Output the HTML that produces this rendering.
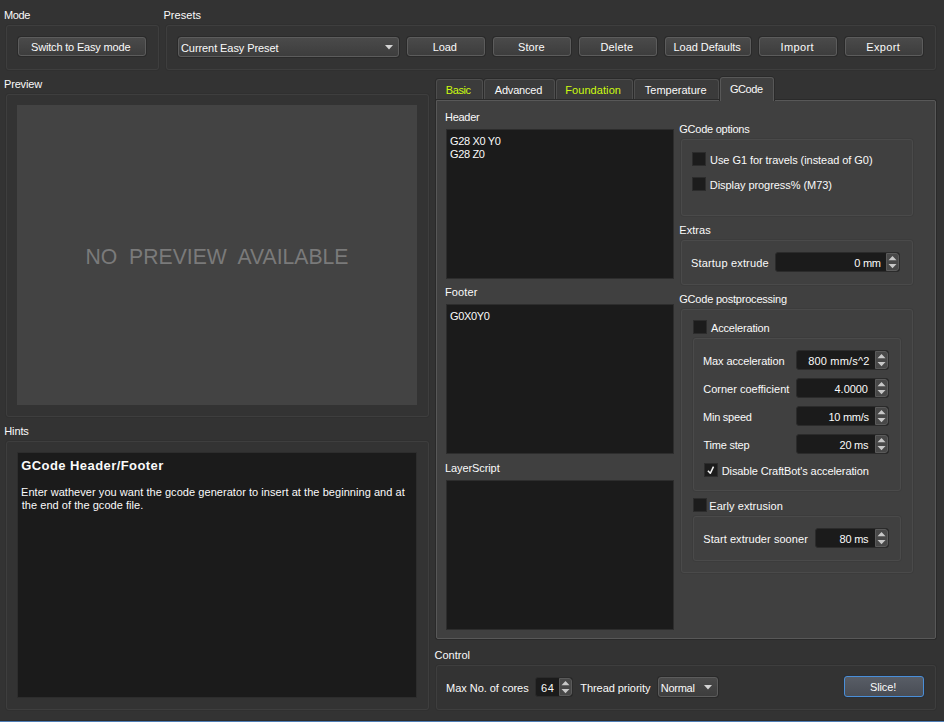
<!DOCTYPE html>
<html>
<head>
<meta charset="utf-8">
<title>Slicer settings</title>
<style>
*{box-sizing:border-box;margin:0;padding:0}
html,body{width:944px;height:722px;overflow:hidden}
body{background:#333333;font-family:"Liberation Sans",sans-serif;font-size:11px;color:#fafafa;position:relative}
.a{position:absolute}
.t{position:absolute;white-space:pre;line-height:13px;height:13px;z-index:5}
.grp{position:absolute;border:1px solid #3e3e3e;border-radius:3px;box-shadow:0 0 0 1px rgba(0,0,0,.06)}
.grp.in{border-color:#4a4a4a}
.btn{position:absolute;border:1px solid #5c5c5c;border-radius:3px;background:linear-gradient(#4a4a4a,#3d3d3d);box-shadow:0 0 0 1px #2a2a2a}
.btn.def{border-color:#4a8fd8;background:linear-gradient(#585d66,#494d55);box-shadow:0 0 0 1px #2c3037}
.ta{position:absolute;background:#1b1b1b;border:1px solid #2d2d2d}
.cb{position:absolute;width:14px;height:14px;background:#1c1c1c;border:1px solid #2c2c2c}
.spin{position:absolute;background:#1b1b1b;border:1px solid #2b2b2b;border-radius:3px}
.spin .ar{position:absolute;right:0;top:0;bottom:0;width:13px;background:#484848;border:1px solid #5a5a5a;border-radius:0 3px 3px 0}
.tab{position:absolute;top:79px;height:20px;border:1px solid #4e4e4e;border-bottom:0;border-radius:3px 3px 0 0;background:#3b3b3b;box-shadow:0 0 0 1px #2a2a2a}
.tab.sel{top:77px;height:24px;background:#404040;border-color:#585858;z-index:3;box-shadow:1px 0 0 0 #2a2a2a,-1px 0 0 0 #2a2a2a,0 -1px 0 0 #2a2a2a;clip-path:inset(-1px -1px 0 -1px)}
.pane{position:absolute;left:436px;top:100px;width:500px;height:539px;background:#404040;border:1px solid #585858;border-radius:0 2px 2px 2px;box-shadow:0 0 0 1px #2a2a2a;z-index:1}
.z2>*{z-index:4}
</style>
</head>
<body>
<div class="grp " style="left:6px;top:25px;width:153px;height:45px"></div>
<div class="grp " style="left:166px;top:25px;width:770px;height:45px"></div>
<div class="btn" style="left:18px;top:37px;width:128px;height:19px;"></div>
<div class="btn" style="left:178px;top:37px;width:221px;height:20px;"><svg class="a" style="right:5px;top:7px" width="8" height="5"><path d="M0 0h8L4 4.4z" fill="#d4d4d4"/></svg></div>
<div class="btn" style="left:407px;top:37px;width:78px;height:19px;"></div>
<div class="btn" style="left:493px;top:37px;width:78px;height:19px;"></div>
<div class="btn" style="left:579px;top:37px;width:78px;height:19px;"></div>
<div class="btn" style="left:665px;top:37px;width:86px;height:19px;"></div>
<div class="btn" style="left:759px;top:37px;width:78px;height:19px;"></div>
<div class="btn" style="left:845px;top:37px;width:78px;height:19px;"></div>
<div class="grp " style="left:6px;top:94px;width:423px;height:323px"></div>
<div class="a" style="left:17px;top:105px;width:400px;height:300px;background:#434343"></div>
<div class="a" id="nopv" style="left:17px;top:244px;width:400px;text-align:center;font-size:21.2px;line-height:26px;color:#7a7a7a;white-space:pre">NO  PREVIEW  AVAILABLE</div>
<div class="grp " style="left:6px;top:441px;width:423px;height:269px"></div>
<div class="ta" style="left:17px;top:452px;width:400px;height:246px"></div>
<div class="pane"></div>
<div class="tab" style="left:436px;width:47px"></div>
<div class="tab" style="left:484px;width:71px"></div>
<div class="tab" style="left:556px;width:77px"></div>
<div class="tab" style="left:634px;width:85px"></div>
<div class="tab sel" style="left:720px;width:54px"></div>
<div class="z2">
<div class="ta" style="left:446px;top:129px;width:228px;height:150px"></div>
<div class="ta" style="left:446px;top:304px;width:228px;height:150px"></div>
<div class="ta" style="left:446px;top:480px;width:228px;height:150px"></div>
<div class="grp in" style="left:681px;top:139px;width:232px;height:77px"></div>
<div class="cb" style="left:692px;top:152px"></div>
<div class="cb" style="left:692px;top:177px"></div>
<div class="grp in" style="left:681px;top:240px;width:232px;height:45px"></div>
<div class="spin" style="left:775px;top:252px;width:125px;height:20px"><div class="ar"><svg width="11" height="16" class="a" style="left:0;top:0"><path d="M1.5 6.2h8L5.5 2z M1.5 10h8L5.5 14.2z" fill="#c8c8c8"/></svg></div></div>
<div class="grp in" style="left:681px;top:309px;width:232px;height:264px"></div>
<div class="cb" style="left:693px;top:320px"></div>
<div class="grp in" style="left:693px;top:338px;width:208px;height:153px"></div>
<div class="spin" style="left:796px;top:350px;width:93px;height:20px"><div class="ar"><svg width="11" height="16" class="a" style="left:0;top:0"><path d="M1.5 6.2h8L5.5 2z M1.5 10h8L5.5 14.2z" fill="#c8c8c8"/></svg></div></div>
<div class="spin" style="left:796px;top:378px;width:93px;height:20px"><div class="ar"><svg width="11" height="16" class="a" style="left:0;top:0"><path d="M1.5 6.2h8L5.5 2z M1.5 10h8L5.5 14.2z" fill="#c8c8c8"/></svg></div></div>
<div class="spin" style="left:796px;top:406px;width:93px;height:20px"><div class="ar"><svg width="11" height="16" class="a" style="left:0;top:0"><path d="M1.5 6.2h8L5.5 2z M1.5 10h8L5.5 14.2z" fill="#c8c8c8"/></svg></div></div>
<div class="spin" style="left:796px;top:434px;width:93px;height:20px"><div class="ar"><svg width="11" height="16" class="a" style="left:0;top:0"><path d="M1.5 6.2h8L5.5 2z M1.5 10h8L5.5 14.2z" fill="#c8c8c8"/></svg></div></div>
<div class="cb" style="left:704px;top:463px"><svg class="a" style="left:-1px;top:-1px" width="14" height="14"><path d="M3.9 7.7L6.3 10.3L9.5 3.7" stroke="#f4f4f4" stroke-width="1.5" fill="none" stroke-linejoin="round"/></svg></div>
<div class="cb" style="left:693px;top:498px"></div>
<div class="grp in" style="left:693px;top:516px;width:208px;height:45px"></div>
<div class="spin" style="left:815px;top:528px;width:74px;height:20px"><div class="ar"><svg width="11" height="16" class="a" style="left:0;top:0"><path d="M1.5 6.2h8L5.5 2z M1.5 10h8L5.5 14.2z" fill="#c8c8c8"/></svg></div></div>
</div>
<div class="grp " style="left:436px;top:665px;width:500px;height:45px"></div>
<div class="spin" style="left:535px;top:677px;width:38px;height:20px"><div class="ar"><svg width="11" height="16" class="a" style="left:0;top:0"><path d="M1.5 6.2h8L5.5 2z M1.5 10h8L5.5 14.2z" fill="#c8c8c8"/></svg></div></div>
<div class="btn" style="left:658px;top:677px;width:60px;height:20px;"><svg class="a" style="right:5px;top:7px" width="8" height="5"><path d="M0 0h8L4 4.4z" fill="#d4d4d4"/></svg></div>
<div class="btn def" style="left:844px;top:676px;width:80px;height:21px"></div>
<div class="a" style="left:0;top:720px;width:944px;height:1px;background:#2c2c2c"></div>
<div class="a" style="left:0;top:721px;width:944px;height:1px;background:#4e7db5"></div>
<div class="t" id="mode" style="left:4.00px;top:9px;letter-spacing:-0.350px;">Mode</div>
<div class="t" id="presets" style="left:163.50px;top:9px;letter-spacing:0.032px;">Presets</div>
<div class="t" id="b_switch" style="left:31.00px;top:41px;letter-spacing:-0.178px;">Switch to Easy mode</div>
<div class="t" id="c_cur" style="left:181.00px;top:42px;letter-spacing:-0.081px;">Current Easy Preset</div>
<div class="t" id="b_load" style="left:432.75px;top:41px;letter-spacing:-0.116px;">Load</div>
<div class="t" id="b_store" style="left:518.00px;top:41px;letter-spacing:0.087px;">Store</div>
<div class="t" id="b_del" style="left:600.50px;top:41px;letter-spacing:0.150px;">Delete</div>
<div class="t" id="b_ld" style="left:673.50px;top:41px;letter-spacing:-0.046px;">Load Defaults</div>
<div class="t" id="b_imp" style="left:780.50px;top:41px;letter-spacing:0.380px;">Import</div>
<div class="t" id="b_exp" style="left:866.25px;top:41px;letter-spacing:0.360px;">Export</div>
<div class="t" id="preview" style="left:4.00px;top:78px;letter-spacing:-0.167px;">Preview</div>
<div class="t" id="hints" style="left:4.25px;top:425px;letter-spacing:-0.125px;">Hints</div>
<div class="t" id="h_title" style="left:21.25px;top:459px;letter-spacing:0.428px;font-weight:bold;font-size:13px;">GCode Header/Footer</div>
<div class="t" id="h_l1" style="left:21.00px;top:486px;letter-spacing:0.053px;">Enter wathever you want the gcode generator to insert at the beginning and at</div>
<div class="t" id="h_l2" style="left:21.75px;top:499px;letter-spacing:0.042px;">the end of the gcode file.</div>
<div class="t" id="t_basic" style="left:445.75px;top:84px;letter-spacing:-0.386px;color:#ccfa10;">Basic</div>
<div class="t" id="t_adv" style="left:494.75px;top:84px;letter-spacing:-0.186px;">Advanced</div>
<div class="t" id="t_found" style="left:565.25px;top:84px;letter-spacing:0.072px;color:#ccfa10;">Foundation</div>
<div class="t" id="t_temp" style="left:644.75px;top:84px;letter-spacing:0.010px;">Temperature</div>
<div class="t" id="t_gcode" style="left:730.00px;top:83px;letter-spacing:-0.450px;">GCode</div>
<div class="t" id="header" style="left:445.00px;top:111px;letter-spacing:-0.280px;">Header</div>
<div class="t" id="g1" style="left:450.00px;top:135px;letter-spacing:-0.350px;">G28 X0 Y0</div>
<div class="t" id="g2" style="left:450.00px;top:148px;letter-spacing:-0.350px;">G28 Z0</div>
<div class="t" id="footer" style="left:445.00px;top:286px;letter-spacing:0.120px;">Footer</div>
<div class="t" id="g3" style="left:450.00px;top:310px;letter-spacing:-0.350px;">G0X0Y0</div>
<div class="t" id="layer" style="left:445.00px;top:462px;letter-spacing:-0.095px;">LayerScript</div>
<div class="t" id="gopt" style="left:679.25px;top:123px;letter-spacing:-0.242px;">GCode options</div>
<div class="t" id="useg1" style="left:710.00px;top:154px;letter-spacing:-0.057px;">Use G1 for travels (instead of G0)</div>
<div class="t" id="disp" style="left:709.75px;top:179px;letter-spacing:-0.060px;">Display progress% (M73)</div>
<div class="t" id="extras" style="left:679.25px;top:224px;letter-spacing:0.050px;">Extras</div>
<div class="t" id="startup" style="left:691.00px;top:257px;letter-spacing:0.175px;">Startup extrude</div>
<div class="t" id="v0" style="left:854.25px;top:257px;letter-spacing:-0.250px;">0 mm</div>
<div class="t" id="gpost" style="left:679.25px;top:293px;letter-spacing:-0.212px;">GCode postprocessing</div>
<div class="t" id="accel" style="left:711.00px;top:322px;letter-spacing:-0.169px;">Acceleration</div>
<div class="t" id="maxacc" style="left:703.00px;top:355px;letter-spacing:-0.104px;">Max acceleration</div>
<div class="t" id="v1" style="left:808.15px;top:355px;letter-spacing:0.183px;">800 mm/s^2</div>
<div class="t" id="corner" style="left:703.25px;top:383px;letter-spacing:0.003px;">Corner coefficient</div>
<div class="t" id="v2" style="left:834.55px;top:383px;letter-spacing:-0.040px;">4.0000</div>
<div class="t" id="minsp" style="left:703.00px;top:411px;letter-spacing:-0.232px;">Min speed</div>
<div class="t" id="v3" style="left:828.40px;top:411px;letter-spacing:-0.250px;">10 mm/s</div>
<div class="t" id="tstep" style="left:703.50px;top:439px;letter-spacing:-0.219px;">Time step</div>
<div class="t" id="v4" style="left:839.55px;top:439px;letter-spacing:-0.250px;">20 ms</div>
<div class="t" id="disable" style="left:721.75px;top:465px;letter-spacing:-0.099px;">Disable CraftBot's acceleration</div>
<div class="t" id="early" style="left:709.25px;top:500px;letter-spacing:0.056px;">Early extrusion</div>
<div class="t" id="startext" style="left:703.25px;top:533px;letter-spacing:0.062px;">Start extruder sooner</div>
<div class="t" id="v5" style="left:839.60px;top:533px;letter-spacing:-0.250px;">80 ms</div>
<div class="t" id="control" style="left:434.50px;top:649px;letter-spacing:0.000px;">Control</div>
<div class="t" id="maxno" style="left:446.00px;top:682px;letter-spacing:-0.030px;">Max No. of cores</div>
<div class="t" id="v6" style="left:541.10px;top:682px;letter-spacing:0.600px;">64</div>
<div class="t" id="thread" style="left:580.25px;top:682px;letter-spacing:-0.054px;">Thread priority</div>
<div class="t" id="normal" style="left:660.75px;top:682px;letter-spacing:-0.260px;">Normal</div>
<div class="t" id="slice" style="left:870.00px;top:681px;letter-spacing:-0.140px;">Slice!</div>
</body>
</html>
